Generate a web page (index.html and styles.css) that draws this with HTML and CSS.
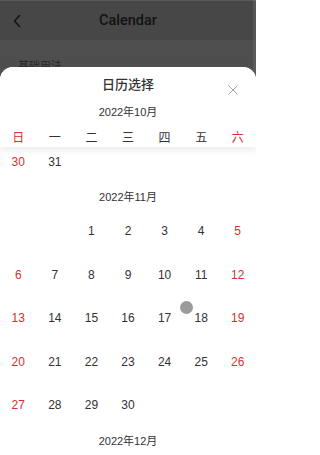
FILE: index.html
```html
<!DOCTYPE html>
<html lang="zh">
<head>
<meta charset="utf-8">
<link rel="stylesheet" href="styles.css">
</head>
<body>
<div class="app">
  <header class="navbar">
    <svg class="back" width="10" height="14" viewBox="0 0 10 14"><path d="M7.5 1.5 L2.5 7 L7.5 12.5" fill="none" stroke="#111" stroke-width="1.4" stroke-linecap="round" stroke-linejoin="round"/></svg>
    <span class="nav-title">Calendar</span>
  </header>
  <div class="page">
    <div class="section-title">基础用法</div>
  </div>

  <div class="popup">
    <div class="cal-header">
      <div class="cal-title">日历选择</div>
      <svg class="close" width="10" height="10" viewBox="0 0 10 10"><path d="M0.5 0.5 L9.5 9.5 M9.5 0.5 L0.5 9.5" stroke="#a4a4a6" stroke-width="1" fill="none"/></svg>
      <div class="cal-subtitle">2022年10月</div>
      <div class="weekdays">
        <span class="wk red">日</span><span class="wk">一</span><span class="wk">二</span><span class="wk">三</span><span class="wk">四</span><span class="wk">五</span><span class="wk red">六</span>
      </div>
    </div>
    <div class="cal-body">
      <div class="scroll">
        <div class="days first">
          <span class="day red">30</span><span class="day">31</span>
        </div>
        <div class="month-title">2022年11月</div>
        <div class="days">
          <span class="day"></span><span class="day"></span><span class="day">1</span><span class="day">2</span><span class="day">3</span><span class="day">4</span><span class="day red">5</span>
          <span class="day red">6</span><span class="day">7</span><span class="day">8</span><span class="day">9</span><span class="day">10</span><span class="day">11</span><span class="day red">12</span>
          <span class="day red">13</span><span class="day">14</span><span class="day">15</span><span class="day">16</span><span class="day">17</span><span class="day">18</span><span class="day red">19</span>
          <span class="day red">20</span><span class="day">21</span><span class="day">22</span><span class="day">23</span><span class="day">24</span><span class="day">25</span><span class="day red">26</span>
          <span class="day red">27</span><span class="day">28</span><span class="day">29</span><span class="day">30</span>
        </div>
        <div class="month-title">2022年12月</div>
      </div>
    </div>
    <div class="touch"></div>
  </div>
  <div class="scrollbar"></div>
</div>
</body>
</html>
```
FILE: styles.css
```css
html, body {
  margin: 0;
  padding: 0;
}
body {
  font-family: "Liberation Sans", "Noto Sans CJK SC", sans-serif;
  color: #323233;
}
.app {
  position: relative;
  width: 256px;
  height: 455px;
  overflow: hidden;
  background: #4e4e4e;
}
.navbar {
  height: 40px;
  background: #474747;
  border-top: 1px solid #5a5a5a;
  box-sizing: border-box;
  display: flex;
  align-items: center;
  justify-content: center;
  position: relative;
}
.back {
  position: absolute;
  left: 12px;
  top: 13px;
}
.nav-title {
  font-family: Roboto, "Liberation Sans", sans-serif;
  font-size: 14.5px;
  font-weight: 500;
  color: #121212;
}
.page {
  padding: 18px 18px 0;
}
.section-title {
  font-size: 11px;
  color: #262626;
  line-height: 16px;
}
.popup {
  position: absolute;
  left: 0;
  right: 0;
  top: 67px;
  bottom: 0;
  background: #fff;
  border-radius: 13px 13px 0 0;
  display: flex;
  flex-direction: column;
}
.cal-header {
  position: relative;
  z-index: 2;
  background: #fff;
  border-radius: 13px 13px 0 0;
  box-shadow: 0 2px 8px rgba(125, 126, 128, 0.18);
}
.cal-title {
  height: 32px;
  line-height: 34px;
  text-align: center;
  font-size: 13px;
  font-weight: 500;
  font-family: "Noto Sans CJK SC", sans-serif;
  color: #323233;
}
.close {
  position: absolute;
  right: 18px;
  top: 18px;
}
.cal-subtitle {
  height: 27px;
  line-height: 27px;
  text-align: center;
  font-size: 11px;
  color: #323233;
}
.weekdays {
  display: grid;
  grid-template-columns: repeat(7, 1fr);
  height: 21px;
  line-height: 21px;
  font-size: 12px;
  font-family: "Noto Sans CJK SC", sans-serif;
}
.wk {
  text-align: center;
}
.red {
  color: #d8312d;
}
.cal-body {
  flex: 1;
  overflow: hidden;
  position: relative;
  z-index: 1;
}
.days {
  display: grid;
  grid-template-columns: repeat(7, 1fr);
  grid-auto-rows: 43.6px;
}
.days.first {
  margin-top: -6.8px;
}
.day {
  display: flex;
  align-items: center;
  justify-content: center;
  font-size: 12px;
  padding-bottom: 1px;
  color: #323233;
}
.day.red {
  color: #d8312d;
}
.month-title {
  height: 26px;
  line-height: 26px;
  text-align: center;
  font-size: 11px;
  color: #323233;
}
.touch {
  position: absolute;
  left: 180px;
  top: 234px;
  width: 13px;
  height: 13px;
  border-radius: 50%;
  background: #9b9b9b;
  z-index: 3;
}
.scrollbar {
  position: absolute;
  right: 0;
  top: 0;
  bottom: 0;
  width: 3px;
  background: rgba(255, 255, 255, 0.08);
}
```
